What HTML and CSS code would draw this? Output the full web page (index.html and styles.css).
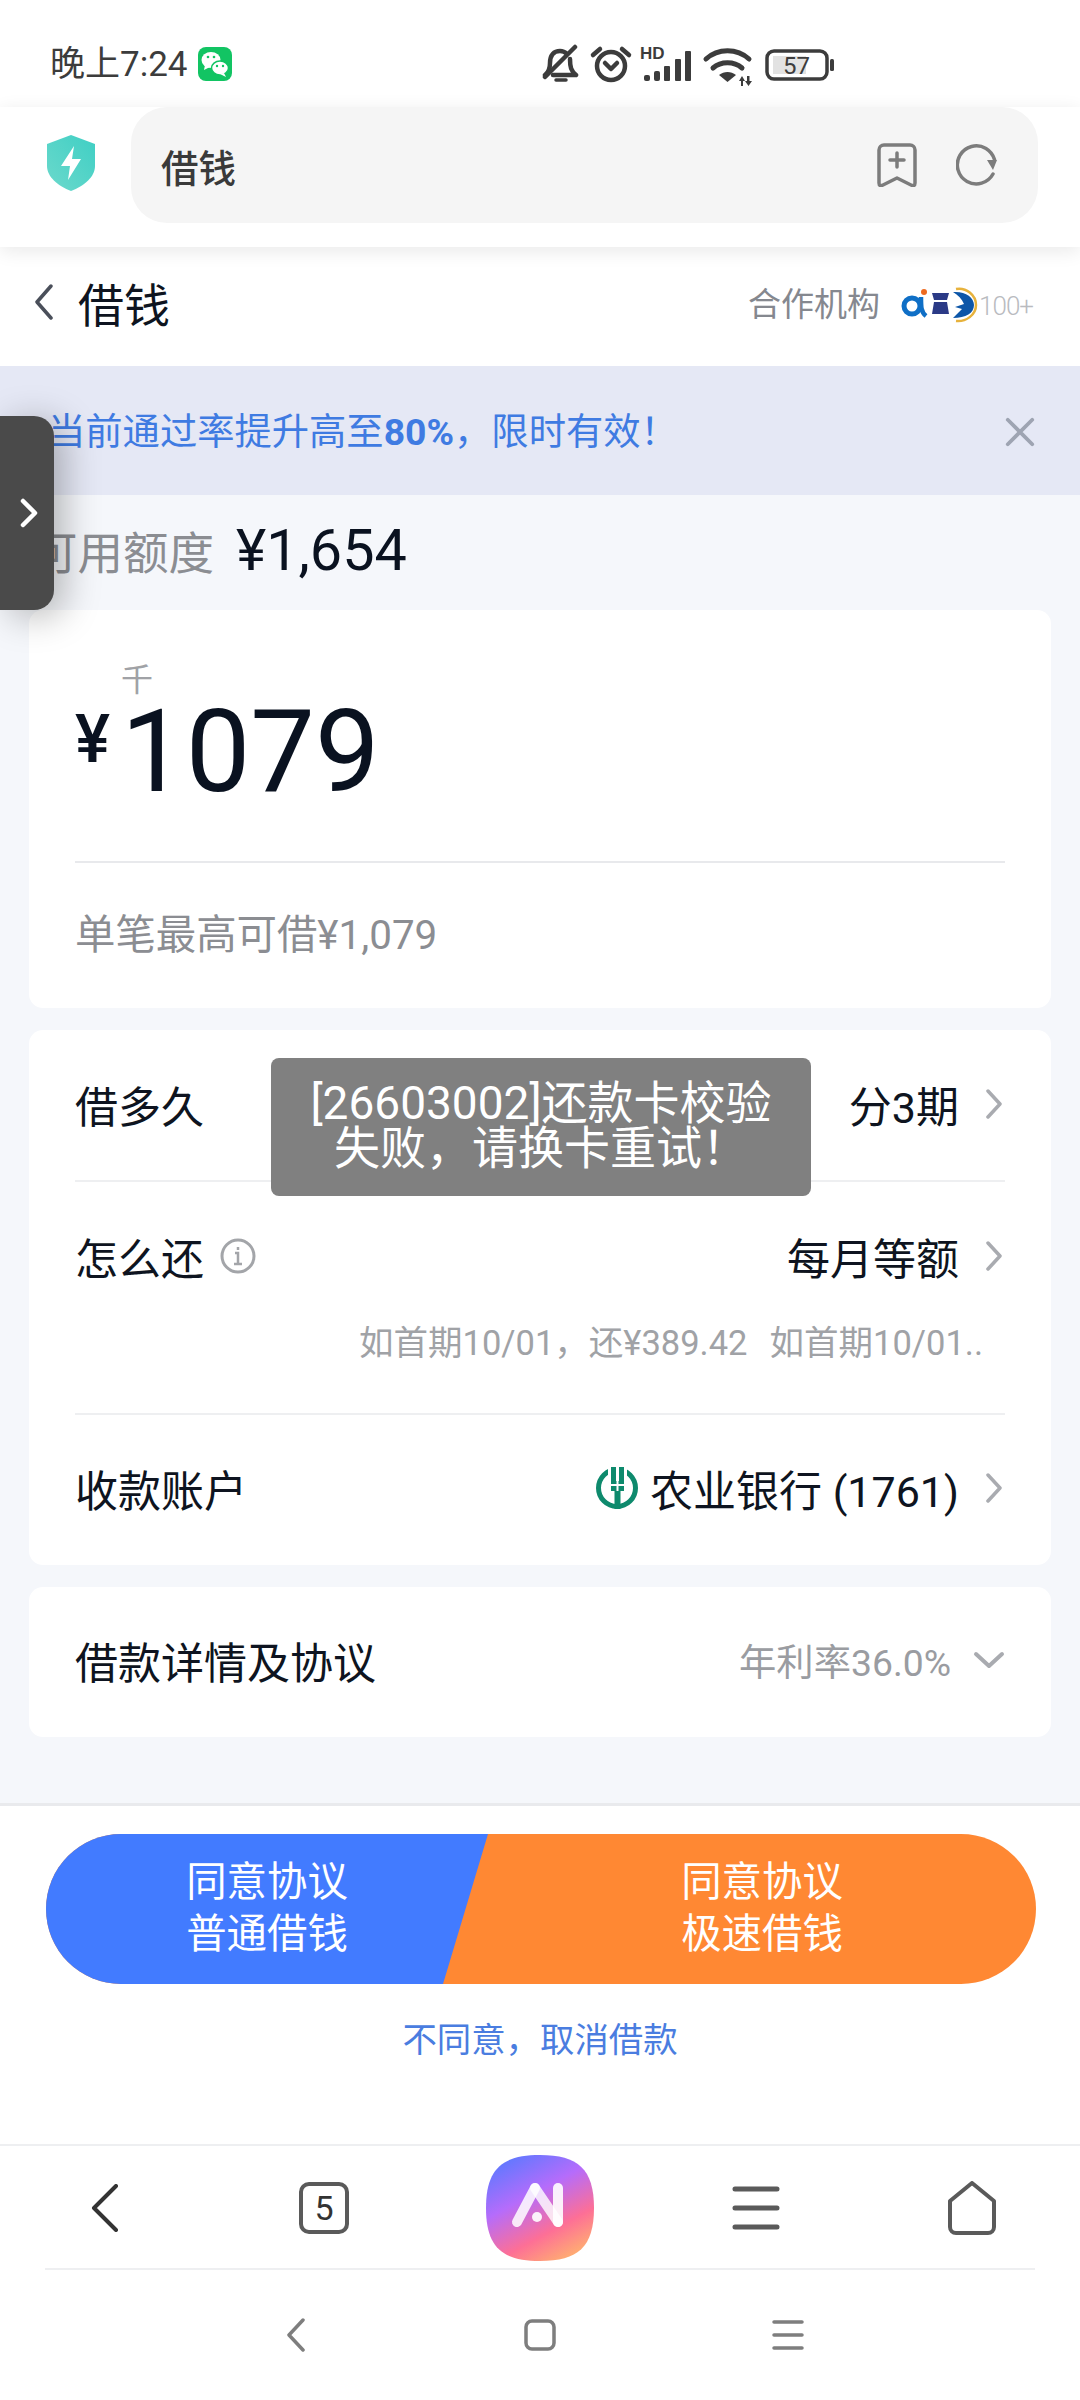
FILE: index.html
```html
<!DOCTYPE html>
<html lang="zh-CN">
<head>
	<meta charset="UTF-8">
	<meta name="viewport" content="width=device-width, initial-scale=1.0">
	<title>借钱</title>
	<link rel="stylesheet" href="styles.css">
</head>
<body>
<div class="page">
	<!-- 状态栏 -->
	<div class="status">
		<span class="time">晚上7:24</span>
		<svg class="wechat" width="34" height="34" viewBox="0 0 34 34">
			<rect width="34" height="34" rx="8" fill="#12c463"/>
			<ellipse cx="13" cy="13" rx="9.500" ry="8" fill="#fff"/>
			<path d="M7 18l-1 5 6-3z" fill="#fff"/>
			<ellipse cx="22" cy="21" rx="8.500" ry="7" fill="#fff" stroke="#12c463" stroke-width="1.500"/>
			<path d="M26 26l2 4-6-3z" fill="#fff"/>
			<circle cx="10" cy="10" r="1.300" fill="#12c463"/><circle cx="16" cy="10" r="1.300" fill="#12c463"/>
			<circle cx="19" cy="19" r="1.200" fill="#12c463"/><circle cx="25" cy="19" r="1.200" fill="#12c463"/>
		</svg>
		<div class="status-icons">
			<svg width="300" height="44" viewBox="0 0 300 44">
				<g fill="none" stroke="#3c3c3c" stroke-width="4.500" stroke-linecap="round" stroke-linejoin="round">
					<path d="M3 31c4-3 5-6 5-12 0-8 4-12 10-12 3 0 5 1 7 3M28 15c0 8 1 12 6 16H11"/>
					<path d="M3 33L33 3"/>
					<path d="M14 36h10" stroke-width="3.500"/>
					<circle cx="69" cy="22" r="14"/>
					<path d="M63 19l6 6 6-6"/>
					<path d="M51 11l7-6M87 11l-7-6"/>
				</g>
				<text x="98" y="15" class="hd">HD</text>
				<g fill="#3c3c3c">
					<rect x="102" y="31" width="6" height="6" rx="2"/>
					<rect x="112" y="27" width="6" height="10" rx="2"/>
					<rect x="122" y="22" width="6" height="15" rx="1"/>
					<rect x="133" y="15" width="6" height="22" rx="1"/>
					<rect x="143" y="7" width="6" height="30" rx="1"/>
				</g>
				<g fill="none" stroke="#3c3c3c" stroke-width="5" stroke-linecap="round">
					<path d="M164 15c12-11 31-11 43 0"/>
					<path d="M171 24c8-7 21-7 29 0"/>
				</g>
				<path d="M177 31c5-4 12-4 17 0l-8.500 7z" fill="#3c3c3c"/>
				<path d="M197 37l3-5 3 5h-2v5h-2v-5zM205 32h2.500v5h2.500l-3.500 5-3.500-5h2z" fill="#3c3c3c"/>
				<rect x="225" y="7" width="60" height="28" rx="7" fill="none" stroke="#3c3c3c" stroke-width="3.500"/>
				<rect x="231" y="12" width="33" height="18" fill="#e2e2e2"/>
				<text x="241" y="30" class="batt">57</text>
				<rect x="288" y="15" width="4" height="12" rx="1.500" fill="#3c3c3c"/>
			</svg>
		</div>
	</div>

	<!-- 浏览器地址栏 -->
	<div class="toolbar">
		<svg class="shield" width="48" height="56" viewBox="0 0 48 56">
			<defs>
				<linearGradient id="sh" x1="0" y1="1" x2="1" y2="0">
					<stop offset="0" stop-color="#6cd9cc"/>
					<stop offset="1" stop-color="#3fcfc4"/>
				</linearGradient>
			</defs>
			<path d="M24 0l24 9v22c0 11-11 20-24 25C11 51 0 42 0 31V9z" fill="url(#sh)"/>
			<path d="M27 11L14 31h9l-2 14 13-21h-9z" fill="#fff"/>
		</svg>
		<div class="address">
			<span class="address-text">借钱</span>
			<svg class="bookmark" width="40" height="44" viewBox="0 0 40 44" fill="none" stroke="#7c7c7c" stroke-width="3.500" stroke-linecap="round" stroke-linejoin="round">
				<path d="M7 2h26a5 5 0 0 1 5 5v33c0 3-2 3-4 2l-14-7-14 7c-2 1-4 1-4-2V7a5 5 0 0 1 5-5z"/>
				<path d="M20 10v14M13 17h14"/>
			</svg>
			<svg class="reload" width="42" height="42" viewBox="0 0 42 42" fill="none" stroke="#7c7c7c" stroke-width="3.500" stroke-linecap="round">
				<path d="M37 30A19 19 0 1 1 30 4.500c4 2.500 7 6 8.500 11"/>
				<path d="M31 16h10l-4 10z" fill="#7c7c7c" stroke="none"/>
			</svg>
		</div>
	</div>

	<!-- 标题栏 -->
	<div class="titlebar">
		<svg class="back" width="20" height="36" viewBox="0 0 20 36" fill="none" stroke="#4a4f5a" stroke-width="3.500" stroke-linecap="round" stroke-linejoin="round">
			<path d="M17 2L3 18l14 16"/>
		</svg>
		<span class="title">借钱</span>
		<span class="partner">合作机构</span>
		<svg class="logos" width="78" height="42" viewBox="0 0 78 42">
			<circle cx="16" cy="21" r="17" fill="#fff"/>
			<circle cx="40" cy="21" r="17" fill="#fff"/>
			<circle cx="60" cy="21" r="17" fill="#fff"/>
			<circle cx="12" cy="22" r="8" fill="none" stroke="#0f6fc6" stroke-width="5"/>
			<path d="M21 13c0 10 0 15 5 19" fill="none" stroke="#0f6fc6" stroke-width="4.500"/>
			<circle cx="24" cy="8" r="3" fill="#ee6a1f"/>
			<path d="M32 9h17l-2 7H34zM34 18h13v0l2 12H32z" fill="#2b3a86"/>
			<path d="M53 8c12-1 21 5 21 13S66 34 53 34l9-9-7-2 9-3c-2-5-6-9-11-12z" fill="#0d56a8"/>
			<path d="M56 5c10-2 20 6 20 16S66 38 56 37" fill="none" stroke="#e7b23c" stroke-width="2.500"/>
		</svg>
		<span class="more">100+</span>
	</div>

	<div class="main">
		<div class="banner">
			<p class="banner-text">当前通过率提升高至<b>80%</b>，限时有效！</p>
			<svg class="banner-close" width="32" height="32" viewBox="0 0 34 34" stroke="#9ea4b2" stroke-width="4" stroke-linecap="round">
				<path d="M4 4l26 26M30 4L4 30"/>
			</svg>
		</div>
		<div class="quota">
			<span class="quota-label">可用额度</span>
			<span class="quota-value">¥1,654</span>
		</div>

		<div class="card amount-card">
			<div class="amount">
				<div class="unit">千</div>
				<div class="amount-line">
					<span class="yen">¥</span>
					<span class="number">1079</span>
				</div>
			</div>
			<div class="limit">单笔最高可借¥1,079</div>
		</div>

		<div class="card">
			<div class="row">
				<span class="row-label">借多久</span>
				<span class="row-value">分3期</span>
				<svg class="arrow" width="18" height="30" viewBox="0 0 18 30" fill="none" stroke="#a9abb0" stroke-width="3.500" stroke-linecap="round" stroke-linejoin="round"><path d="M3 2l12 13L3 28"/></svg>
			</div>
			<div class="repay">
				<div class="row row-flat">
					<span class="row-label">怎么还</span>
					<svg class="info" width="36" height="36" viewBox="0 0 36 36" fill="none" stroke="#a3a5a9" stroke-width="3">
						<circle cx="18" cy="18" r="16"/>
						<path d="M15 15h3v11M14 26h8M18 9v3" stroke-width="2.500"/>
					</svg>
					<span class="row-value">每月等额</span>
					<svg class="arrow" width="18" height="30" viewBox="0 0 18 30" fill="none" stroke="#a9abb0" stroke-width="3.500" stroke-linecap="round" stroke-linejoin="round"><path d="M3 2l12 13L3 28"/></svg>
				</div>
				<div class="plan">
					<span>如首期10/01，还¥389.42</span>
					<span>如首期10/01..</span>
				</div>
			</div>
			<div class="row row-last">
				<span class="row-label">收款账户</span>
				<svg class="bank" width="42" height="42" viewBox="0 0 42 42">
					<circle cx="21" cy="21" r="18.500" fill="none" stroke="#0e8a6d" stroke-width="5"/>
					<path d="M12 0h19v12H12z" fill="#fff"/>
					<path d="M15 0h13v24h-3.500v18h-6V24H15z" fill="#0e8a6d"/>
					<path d="M20 0h3v14h-3zM15 17h13v2H15zM20.500 14h2v10h-2z" fill="#fff"/>
				</svg>
				<span class="row-value bank-name">农业银行 (1761)</span>
				<svg class="arrow" width="18" height="30" viewBox="0 0 18 30" fill="none" stroke="#a9abb0" stroke-width="3.500" stroke-linecap="round" stroke-linejoin="round"><path d="M3 2l12 13L3 28"/></svg>
			</div>
		</div>

		<div class="card">
			<div class="row row-last">
				<span class="row-label">借款详情及协议</span>
				<span class="rate">年利率36.0%</span>
				<svg class="arrow-down" width="32" height="18" viewBox="0 0 32 18" fill="none" stroke="#a9abb0" stroke-width="4" stroke-linecap="round" stroke-linejoin="round"><path d="M3 3l13 12L29 3"/></svg>
			</div>
		</div>
	</div>

	<div class="footer">
		<div class="btn">
			<div class="btn-left">同意协议<br>普通借钱</div>
			<div class="btn-right">同意协议<br>极速借钱</div>
		</div>
		<div class="cancel">不同意，取消借款</div>
	</div>

	<!-- 浏览器底栏 -->
	<div class="nav">
		<svg class="nav-back" width="28" height="48" viewBox="0 0 28 48" fill="none" stroke="#333" stroke-width="4" stroke-linecap="round" stroke-linejoin="round"><path d="M25 2L3 24l22 22"/></svg>
		<div class="tabs">5</div>
		<svg class="ai" width="108" height="106" viewBox="0 0 108 106">
			<defs>
				<linearGradient id="ai" x1="0.2" y1="0" x2="0.75" y2="1">
					<stop offset="0" stop-color="#5b79ff"/>
					<stop offset="0.38" stop-color="#b56cfb"/>
					<stop offset="0.72" stop-color="#fd6f96"/>
					<stop offset="1" stop-color="#ffb070"/>
				</linearGradient>
			</defs>
			<path d="M54 0c38 0 54 14 54 53s-16 53-54 53S0 92 0 53 16 0 54 0z" fill="url(#ai)"/>
			<g fill="none" stroke="#fff" stroke-width="10" stroke-linecap="round">
				<path d="M31 67L49 33" opacity=".85"/>
				<path d="M49 33L72 67" opacity=".8"/>
				<path d="M72 67V33" opacity=".9"/>
			</g>
			<circle cx="51" cy="62" r="5" fill="#fff" opacity=".9"/>
		</svg>
		<svg width="48" height="44" viewBox="0 0 48 44" stroke="#5a5a5a" stroke-width="5" stroke-linecap="round"><path d="M3 3h42M3 22h42M3 41h42"/></svg>
		<svg width="50" height="54" viewBox="0 0 50 54" fill="none" stroke="#5a5a5a" stroke-width="4" stroke-linejoin="round"><path d="M25 2L47 20v26a6 6 0 0 1-6 6H9a6 6 0 0 1-6-6V20z"/></svg>
	</div>

	<div class="sysnav">
		<svg class="sys-back" width="20" height="34" viewBox="0 0 20 34" fill="none" stroke="#7e7e7e" stroke-width="3.500" stroke-linecap="round" stroke-linejoin="round"><path d="M17 2L3 17l14 15"/></svg>
		<svg width="32" height="32" viewBox="0 0 32 32" fill="none" stroke="#7e7e7e" stroke-width="3.500"><rect x="2" y="2" width="28" height="28" rx="6"/></svg>
		<svg class="sys-menu" width="32" height="30" viewBox="0 0 32 30" stroke="#7e7e7e" stroke-width="3.500" stroke-linecap="round"><path d="M2 2h28M2 15h28M2 28h28"/></svg>
	</div>

	<!-- 悬浮层 -->
	<div class="side-tab">
		<svg width="18" height="30" viewBox="0 0 18 30" fill="none" stroke="#fff" stroke-width="4.500" stroke-linecap="round" stroke-linejoin="round"><path d="M3 3l12 12L3 27"/></svg>
	</div>
	<div class="toast">[26603002]还款卡校验<br>失败，请换卡重试！</div>
</div>
</body>
</html>
```

FILE: styles.css
```css
* {
    padding: 0;
    margin: 0;
    box-sizing: border-box;
}

body {
    background: #fff;
    font-family: Roboto, "Noto Sans CJK SC", sans-serif;
}

svg {
    display: block;
    flex: none;
}

.page {
    position: relative;
    width: 1080px;
    height: 2400px;
    overflow: hidden;
    display: flex;
    flex-direction: column;
}

/* status bar */
.status {
    height: 107px;
    flex: none;
    padding: 47px 0 0 50px;
    display: flex;
    align-items: flex-start;
}

.time {
    font-size: 35px;
    line-height: 36px;
    color: #3c3c3c;
    width: 148px;
}

.status-icons {
    margin-left: 310px;
    margin-top: -3px;
}

.hd {
    font: bold 17px "Liberation Sans", sans-serif;
    fill: #3c3c3c;
}

.batt {
    font: 24px Roboto, sans-serif;
    fill: #3c3c3c;
}

/* toolbar */
.toolbar {
    height: 140px;
    flex: none;
    padding: 0 42px 24px 47px;
    display: flex;
    align-items: center;
    position: relative;
    z-index: 2;
    background: #fff;
    box-shadow: 0 4px 18px rgba(0, 0, 0, .09);
}

.shield {
    margin-right: 36px;
    margin-top: -4px;
}

.address {
    flex: 1;
    height: 116px;
    border-radius: 36px;
    background: #f5f5f5;
    padding: 0 40px 0 30px;
    display: flex;
    align-items: center;
}

.address-text {
    flex: 1;
    font-size: 37.500px;
    font-weight: 500;
    color: #3a3a3a;
}

.reload {
    margin-left: 39px;
}

/* title bar */
.titlebar {
    height: 119px;
    flex: none;
    padding: 0 47px 10px 34px;
    display: flex;
    align-items: center;
}

.title {
    flex: 1;
    margin-left: 24px;
    font-size: 46px;
    color: #0e1420;
}

.partner {
    font-size: 33px;
    color: #85888f;
}

.logos {
    margin-left: 20px;
    margin-top: 6px;
}

.more {
    margin-left: 1px;
    margin-top: 8px;
    font-size: 26px;
    font-weight: 300;
    color: #b9bbbf;
    letter-spacing: -1px;
}

/* main */
.main {
    height: 1437px;
    flex: none;
    background: #f5f7fb;
}

.banner {
    height: 129px;
    background: #e5e8f5;
    padding: 0 44px 4px 48px;
    display: flex;
    align-items: center;
    justify-content: space-between;
}

.banner-close {
    margin-top: 6px;
}

.banner-text {
    font-size: 37.300px;
    color: #3f7be2;
}

.quota {
    height: 115px;
    padding: 0 0 5px 32px;
    display: flex;
    align-items: center;
}

.quota-label {
    font-size: 45.500px;
    color: #8b8d92;
}

.quota-value {
    margin-left: 22px;
    font-size: 57.500px;
    color: #0a1220;
}

.card {
    margin: 0 29px 22px;
    padding: 0 46px;
    background: #fff;
    border-radius: 14px;
}

.amount-card {
    height: 398px;
}

.amount {
    height: 253px;
    padding-top: 57px;
    border-bottom: 2px solid #e8e9ec;
}

.unit {
    margin-left: 46px;
    font-size: 32px;
    line-height: 26px;
    color: #a0a2a6;
}

.amount-line {
    display: flex;
    align-items: flex-start;
}

.yen {
    font-size: 66px;
    font-weight: 500;
    line-height: 72px;
    margin-top: 11px;
    width: 46px;
    color: #0a1220;
}

.number {
    font-size: 115px;
    line-height: 118px;
    color: #0a1220;
}

.limit {
    height: 137px;
    display: flex;
    align-items: center;
    font-size: 40.400px;
    color: #8b8d92;
}

.row {
    height: 152px;
    padding-bottom: 3px;
    display: flex;
    align-items: center;
    border-bottom: 2px solid #eeeff1;
}

.row-flat {
    height: 151px;
    border-bottom: 0;
}

.row-last {
    height: 150px;
    padding-bottom: 4px;
    border-bottom: 0;
}

.row-label {
    flex: 1;
    font-size: 43px;
    color: #0e1420;
}

.row-flat .row-label {
    flex: none;
}

.row-flat .row-value {
    margin-left: auto;
}

.row-value {
    font-size: 43px;
    color: #0e1420;
}

.bank-name {
    margin-left: 12px;
}

.arrow {
    margin-left: 26px;
    margin-right: 2px;
}

.info {
    margin-left: 16px;
}

.repay {
    height: 233px;
    border-bottom: 2px solid #eeeff1;
}

.plan {
    display: flex;
    justify-content: flex-end;
    gap: 22px;
    padding-right: 22px;
    margin-top: -18px;
    font-size: 34.500px;
    color: #a0a2a6;
}

.rate {
    font-size: 37.300px;
    color: #9a9ca1;
}

.arrow-down {
    margin-left: 22px;
}

/* footer */
.footer {
    height: 341px;
    flex: none;
    padding-top: 28px;
    border-top: 3px solid #e9eaed;
    background: #fff;
}

.btn {
    width: 990px;
    height: 150px;
    margin-left: 46px;
    border-radius: 75px;
    overflow: hidden;
    background: #ff8833;
    display: flex;
    font-size: 40.400px;
    line-height: 52px;
    color: #fff;
    text-align: center;
}

.btn-left {
    width: 442px;
    padding-top: 23px;
    background: #427bff;
    clip-path: polygon(0 0, 100% 0, calc(100% - 45px) 100%, 0 100%);
}

.btn-right {
    flex: 1;
    padding-top: 23px;
}

.cancel {
    margin-top: 32px;
    font-size: 34.400px;
    line-height: 48px;
    text-align: center;
    color: #4a7de0;
}

/* bottom nav */
.nav {
    height: 126px;
    flex: none;
    border-top: 2px solid #eeeff1;
    display: grid;
    grid-template-columns: repeat(5, 216px);
    align-items: center;
    justify-items: center;
    position: relative;
}

.nav::after {
    content: "";
    position: absolute;
    left: 45px;
    right: 45px;
    bottom: 0;
    height: 2px;
    background: #eeeff1;
}

.nav-back {
    margin-right: 6px;
}

.tabs {
    width: 50px;
    height: 52px;
    border: 4px solid #5a5a5a;
    border-radius: 10px;
    font-size: 34px;
    line-height: 44px;
    text-align: center;
    color: #333;
}

.sysnav {
    flex: 1;
    display: grid;
    grid-template-columns: repeat(3, 246px);
    justify-content: center;
    align-items: center;
    justify-items: center;
}

.sys-back {
    margin-left: 4px;
}

.sys-menu {
    margin-left: 3px;
}

/* overlays */
.side-tab {
    position: absolute;
    left: 0;
    top: 416px;
    width: 54px;
    height: 194px;
    background: #4a4a4a;
    border-radius: 0 20px 20px 0;
    box-shadow: 10px 6px 36px rgba(0, 0, 0, .28);
    display: flex;
    align-items: center;
    padding-left: 20px;
}

.toast {
    position: absolute;
    left: 271px;
    top: 1058px;
    width: 540px;
    height: 138px;
    padding-top: 23px;
    background: #808080;
    border-radius: 8px;
    font-size: 46px;
    line-height: 45px;
    color: #fff;
    text-align: center;
}
```
